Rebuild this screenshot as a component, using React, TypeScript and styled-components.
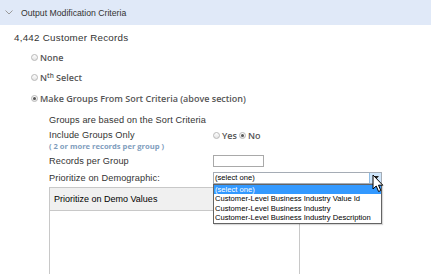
import React from "react";
import styled, { createGlobalStyle } from "styled-components";

const Global = createGlobalStyle`
  html, body { margin: 0; padding: 0; background: #fff; }
  body { font-family: "Liberation Sans", Arial, sans-serif; }
  * { box-sizing: border-box; }
`;

const Page = styled.div`
  width: 431px;
  height: 274px;
  overflow: hidden;
  position: relative;
`;

const Header = styled.div`
  height: 25px;
  background: #e0e9f8;
  display: flex;
  align-items: center;
  padding-left: 5px;
  gap: 8px;
  font-size: 8.7px;
  color: #333;
`;

const Body = styled.div`
  padding-left: 14px;
`;

const Count = styled.div`
  margin-top: 6px;
  font-size: 9.8px;
  letter-spacing: 0.25px;
  line-height: 14px;
  color: #333;
`;

const RadioGroup = styled.div`
  margin-top: 2px;
  padding-left: 17px;
`;

const RadioRow = styled.label`
  height: 20.5px;
  display: flex;
  align-items: center;
  gap: 2px;
  font-family: "Open Sans", sans-serif;
  font-weight: 600;
  font-size: 9px;
  color: #555;
`;

const Radio = styled.span<{ $checked?: boolean }>`
  width: 7px;
  height: 7px;
  border-radius: 50%;
  border: 1px solid #b8b8b8;
  background: linear-gradient(#ffffff, #e4e4e4);
  display: inline-flex;
  align-items: center;
  justify-content: center;
  flex: none;
  &::after {
    content: "";
    width: 3px;
    height: 3px;
    border-radius: 50%;
    background: ${(p) => (p.$checked ? "#555" : "transparent")};
  }
`;

const Sup = styled.sup`
  font-size: 6.5px;
  line-height: 0;
  vertical-align: 3px;
`;

const Details = styled.div`
  padding-left: 35px;
  margin-top: 4px;
  font-size: 9.2px;
  letter-spacing: 0.1px;
  color: #333;
`;

const Row = styled.div<{ $h: number; $mt?: number }>`
  display: flex;
  height: ${(p) => p.$h}px;
  margin-top: ${(p) => p.$mt ?? 0}px;
  align-items: flex-start;
`;

const LabelCol = styled.div`
  width: 164px;
  flex: none;
  display: flex;
  flex-direction: column;
`;

const Label = styled.div`
  line-height: 14px;
`;

const Hint = styled.div`
  font-family: "Open Sans", sans-serif;
  font-weight: 700;
  font-size: 7.6px;
  line-height: 9px;
  letter-spacing: 0;
  color: #7f9dbd;
`;

const Controls = styled.div<{ $pt?: number }>`
  display: flex;
  align-items: center;
  padding-top: ${(p) => p.$pt ?? 0}px;
  font-family: "Open Sans", sans-serif;
  font-weight: 600;
  font-size: 9px;
  letter-spacing: 0;
  color: #555;
  gap: 2px;
  position: relative;
`;

const TextBox = styled.div`
  width: 51px;
  height: 12px;
  border: 1px solid #a9a9a9;
  background: #fff;
`;

const Select = styled.div`
  width: 169px;
  height: 12px;
  border: 1px solid #a5acb5;
  background: #fff;
  font-size: 7.6px;
  line-height: 10px;
  padding-left: 1px;
  color: #000;
  position: relative;
  font-family: "Liberation Sans", Arial, sans-serif;
  font-weight: 400;
`;

const SelectArrow = styled.div`
  position: absolute;
  right: 0;
  top: 0;
  width: 12px;
  height: 10px;
  background: #cfe6fb;
  border-left: 1px solid #8fbde6;
  display: flex;
  align-items: center;
  justify-content: center;
`;

const Dropdown = styled.div`
  position: absolute;
  top: 11px;
  left: -1px;
  width: 169px;
  border: 1px solid #646464;
  background: #fff;
  font-size: 7.6px;
  line-height: 9.5px;
  color: #000;
  z-index: 5;
  box-shadow: 1px 1px 1px rgba(0, 0, 0, 0.15);
`;

const Option = styled.div<{ $selected?: boolean }>`
  padding-left: 1px;
  white-space: nowrap;
  background: ${(p) => (p.$selected ? "#3399ff" : "transparent")};
  color: ${(p) => (p.$selected ? "#fff" : "#000")};
`;

const Cursor = styled.svg`
  position: absolute;
  left: 158px;
  top: 1px;
  z-index: 6;
`;

const Table = styled.div`
  margin-top: 2px;
  width: 251px;
  height: 92px;
  border-left: 1px solid #c8c8c8;
  border-right: 1px solid #c8c8c8;
`;

const TableHead = styled.div`
  height: 24px;
  background: #f0f0f0;
  border-top: 1px solid #c8c8c8;
  border-bottom: 1px solid #c8c8c8;
  display: flex;
  align-items: center;
  padding-left: 4px;
  font-size: 9px;
  letter-spacing: 0;
  color: #000;
`;

export default function App() {
  return (
    <Page>
      <Global />
      <Header>
        <svg width="8" height="5" viewBox="0 0 8 5">
          <path d="M0.5 0.5 L4 4 L7.5 0.5" fill="none" stroke="#9a9a9a" strokeWidth="1" />
        </svg>
        <span>Output Modification Criteria</span>
      </Header>
      <Body>
        <Count>4,442 Customer Records</Count>
        <RadioGroup>
          <RadioRow>
            <Radio />
            None
          </RadioRow>
          <RadioRow>
            <Radio />
            <span>
              N<Sup>th</Sup> Select
            </span>
          </RadioRow>
          <RadioRow>
            <Radio $checked />
            Make Groups From Sort Criteria (above section)
          </RadioRow>
        </RadioGroup>
        <Details>
          <Row $h={14}>
            <Label>Groups are based on the Sort Criteria</Label>
          </Row>
          <Row $h={25} $mt={1}>
            <LabelCol>
              <Label>Include Groups Only</Label>
              <Hint>( 2 or more records per group )</Hint>
            </LabelCol>
            <Controls $pt={1}>
              <Radio />
              <span>Yes</span>
              <Radio $checked />
              <span>No</span>
            </Controls>
          </Row>
          <Row $h={14} $mt={1}>
            <LabelCol>
              <Label>Records per Group</Label>
            </LabelCol>
            <Controls $pt={1}>
              <TextBox />
            </Controls>
          </Row>
          <Row $h={14} $mt={3}>
            <LabelCol>
              <Label>Prioritize on Demographic:</Label>
            </LabelCol>
            <Controls $pt={1}>
              <Select>
                (select one)
                <SelectArrow>
                  <svg width="6" height="4" viewBox="0 0 6 4">
                    <path d="M0 0 L6 0 L3 3.5 Z" fill="#222" />
                  </svg>
                </SelectArrow>
                <Dropdown>
                  <Option $selected>(select one)</Option>
                  <Option>Customer-Level Business Industry Value Id</Option>
                  <Option>Customer-Level Business Industry</Option>
                  <Option>Customer-Level Business Industry Description</Option>
                </Dropdown>
                <Cursor width="12" height="19" viewBox="0 0 12 19">
                  <path
                    d="M1 1 L1 15 L4.2 12 L6.6 17.5 L8.8 16.5 L6.5 11.2 L10.8 11.2 Z"
                    fill="#fff"
                    stroke="#000"
                    strokeWidth="1"
                    strokeLinejoin="round"
                  />
                </Cursor>
              </Select>
            </Controls>
          </Row>
          <Table>
            <TableHead>Prioritize on Demo Values</TableHead>
          </Table>
        </Details>
      </Body>
    </Page>
  );
}
